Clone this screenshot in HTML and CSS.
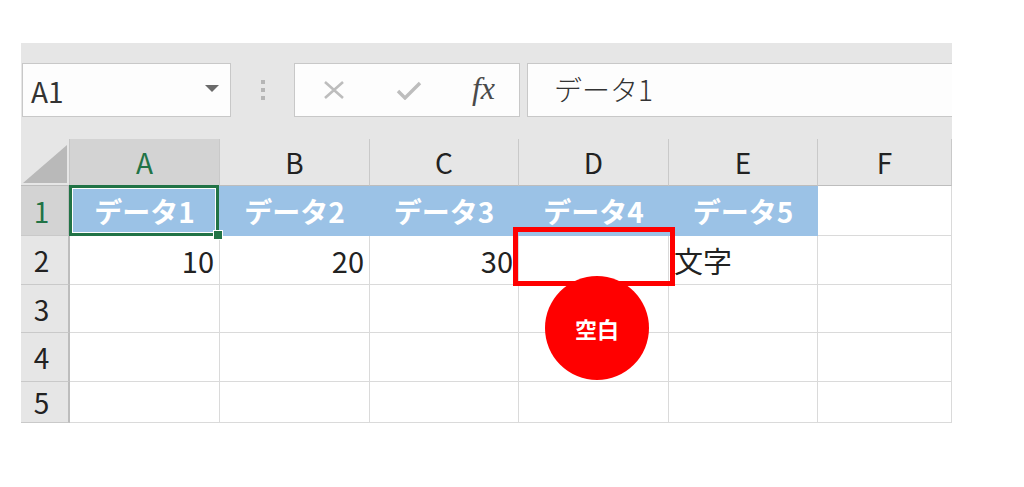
FILE: index.html
```html
<!DOCTYPE html>
<html lang="ja">
<head>
  <meta charset="UTF-8" />
  <title>空白セル</title>
  <link rel="stylesheet" href="styles.css">
</head>
<body>

  <div class="sheet">
    <div class="toolbar">
      <div class="namebox">
        <span>A1</span>
        <svg class="drop" width="14" height="8" viewBox="0 0 14 8"><path d="M0 0h14L7 7z" fill="#6a6a6a"/></svg>
      </div>
      <div class="grip"><i></i><i></i><i></i></div>
      <div class="fbuttons">
        <svg width="24" height="20" viewBox="0 0 24 20"><path d="M3 2l18 16M21 2L3 18" stroke="#bdbdbd" stroke-width="2.6" fill="none"/></svg>
        <svg width="26" height="20" viewBox="0 0 26 20"><path d="M2 11l7 7L24 3" stroke="#bdbdbd" stroke-width="3.4" fill="none"/></svg>
        <span class="fx">fx</span>
      </div>
      <div class="fbar">データ1</div>
    </div>

    <div class="grid">
      <div class="corner"><svg width="46" height="40" viewBox="0 0 46 40"><path d="M45 1V39H1z" fill="#b9b9b9"/></svg></div>
      <div class="colhead active">A</div>
      <div class="colhead">B</div>
      <div class="colhead">C</div>
      <div class="colhead">D</div>
      <div class="colhead">E</div>
      <div class="colhead">F</div>

      <div class="rowhead active">1</div>
      <div class="cell title selected">データ1</div>
      <div class="cell title">データ2</div>
      <div class="cell title">データ3</div>
      <div class="cell title">データ4</div>
      <div class="cell title">データ5</div>
      <div class="cell"></div>

      <div class="rowhead">2</div>
      <div class="cell num">10</div>
      <div class="cell num">20</div>
      <div class="cell num">30</div>
      <div class="cell blank">
        <div class="mark"></div>
        <div class="badge">空白</div>
      </div>
      <div class="cell text">文字</div>
      <div class="cell"></div>

      <div class="rowhead">3</div>
      <div class="cell"></div><div class="cell"></div><div class="cell"></div>
      <div class="cell"></div><div class="cell"></div><div class="cell"></div>

      <div class="rowhead">4</div>
      <div class="cell"></div><div class="cell"></div><div class="cell"></div>
      <div class="cell"></div><div class="cell"></div><div class="cell"></div>

      <div class="rowhead">5</div>
      <div class="cell"></div><div class="cell"></div><div class="cell"></div>
      <div class="cell"></div><div class="cell"></div><div class="cell"></div>
    </div>
  </div>

</body>
</html>
```

FILE: styles.css
```css
body {
  margin: 0;
  background: #fff;
  font-family: "Noto Sans CJK JP", sans-serif;
  color: #222;
}

.sheet {
  margin: 43px 0 0 21px;
  width: 931px;
  background: #e6e6e6;
}

/* formula bar */
.toolbar {
  display: flex;
  padding: 20px 0 22px 1px;
}

.namebox {
  width: 209px;
  height: 54px;
  box-sizing: border-box;
  background: #fdfdfd;
  border: 1px solid #c8c8c8;
  display: flex;
  align-items: center;
  justify-content: space-between;
  padding: 2px 11px 0 8px;
  font-size: 28px;
  color: #333;
}

.namebox .drop {
  margin-top: -4px;
}

.grip {
  width: 63px;
  display: flex;
  flex-direction: column;
  align-items: center;
  justify-content: center;
  gap: 4px;
}

.grip i {
  width: 4px;
  height: 4px;
  background: #b5b5b5;
}

.fbuttons {
  width: 226px;
  height: 54px;
  box-sizing: border-box;
  background: #fdfdfd;
  border: 1px solid #c8c8c8;
  display: flex;
  align-items: center;
  justify-content: space-between;
  padding: 0 24px 0 27px;
}

.fx {
  font-family: "Liberation Serif", serif;
  font-style: italic;
  font-size: 32px;
  color: #4a4a4a;
  margin-top: -4px;
}

.fbar {
  flex: 1;
  height: 54px;
  margin-left: 7px;
  box-sizing: border-box;
  background: #fdfdfd;
  border: 1px solid #c8c8c8;
  border-right: none;
  padding: 3px 0 0 26px;
  font-size: 28px;
  font-weight: 300;
  color: #333;
  line-height: 44px;
}

/* worksheet grid */
.grid {
  display: grid;
  grid-template-columns: 49px 150px 150px 149px 150px 149px 134px;
  grid-template-rows: 47px 50px 49px 48px 49px 41px;
  overflow: hidden;
}

.grid > div {
  box-sizing: border-box;
  display: flex;
  align-items: center;
}

.corner {
  justify-content: center;
  border-right: 1px solid #c6c6c6;
  border-bottom: 1px solid #bdbdbd;
  padding-top: 4px;
}

.colhead {
  justify-content: center;
  font-size: 28px;
  border-right: 1px solid #c9c9c9;
  border-bottom: 1px solid #bdbdbd;
}

.rowhead {
  justify-content: center;
  font-size: 28px;
  padding-right: 6px;
  border-right: 2px solid #bdbdbd;
  border-bottom: 1px solid #c9c9c9;
}

.colhead.active,
.rowhead.active {
  background: #d3d3d3;
  color: #217346;
}

.cell {
  background: #fff;
  border-right: 1px solid #dadada;
  border-bottom: 1px solid #dadada;
  font-size: 29px;
}

.cell.title {
  background: #9bc2e6;
  color: #fff;
  font-weight: 700;
  font-size: 28px;
  justify-content: center;
  border-color: #9bc2e6;
}

.cell.num {
  justify-content: flex-end;
  padding-right: 5px;
  color: #222;
}

.cell.text {
  padding-left: 5px;
  color: #222;
}

.cell.selected {
  position: relative;
}

.cell.selected::before {
  content: "";
  position: absolute;
  inset: -1px 0 -1px -1px;
  border: 3px solid #217346;
  box-shadow: inset 0 0 0 1px #fff;
}

.cell.selected::after {
  content: "";
  position: absolute;
  right: -4px;
  bottom: -5px;
  width: 8px;
  height: 8px;
  background: #217346;
  border: 1px solid #fff;
}

.cell.blank {
  position: relative;
}

.mark {
  position: absolute;
  left: -6px;
  top: -9px;
  width: 162px;
  height: 59px;
  box-sizing: border-box;
  border: 5px solid #ff0000;
}

.badge {
  position: absolute;
  left: 26px;
  top: 40px;
  width: 104px;
  height: 104px;
  border-radius: 50%;
  background: #ff0000;
  color: #fff;
  font-size: 22px;
  font-weight: 700;
  display: flex;
  align-items: center;
  justify-content: center;
}
```
